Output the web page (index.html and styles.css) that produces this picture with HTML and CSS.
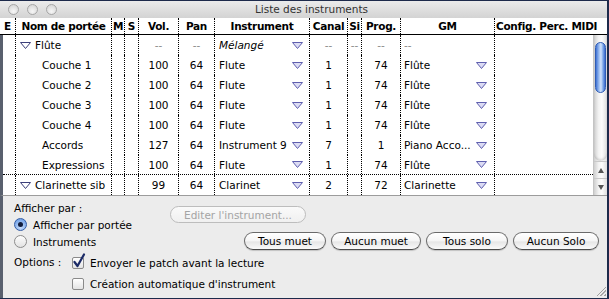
FILE: index.html
```html
<!DOCTYPE html>
<html lang="fr">
<head>
    <meta charset="UTF-8">
    <meta name="viewport" content="width=device-width, initial-scale=1.0">
    <title>Liste des instruments</title>

    <link rel="stylesheet" href="styles.css">
</head>
<body>
    <div class="window">
        <div class="titlebar">
            <div class="lights"><span></span><span></span><span></span></div>
            <div class="title">Liste des instruments</div>
        </div>

        <div class="row head">
            <div>E</div><div>Nom de portée</div><div>M</div><div>S</div><div>Vol.</div><div>Pan</div>
            <div>Instrument</div><div>Canal</div><div>Si</div><div>Prog.</div><div>GM</div>
            <div class="cfg">Config. Perc. MIDI</div>
        </div>

        <div class="list">
            <div class="rows">
                <div class="row">
                    <div></div>
                    <div class="name staff"><svg class="disc" width="11" height="7"><polygon points="0.5,0.5 10.5,0.5 5.5,6.5" /></svg>Flûte</div>
                    <div></div><div></div>
                    <div class="dash">--</div><div class="dash">--</div>
                    <div class="pick"><i>Mélangé</i><svg class="arrow" width="11" height="7"><polygon points="0.5,0.5 10.5,0.5 5.5,6.5" /></svg></div>
                    <div class="dash">--</div><div class="dash">--</div><div class="dash">--</div>
                    <div class="pick gm"><span class="grey">--</span></div>
                    <div></div>
                </div>

                <div class="row">
                    <div></div><div class="name">Couche 1</div><div></div><div></div>
                    <div>100</div><div>64</div>
                    <div class="pick">Flute<svg class="arrow" width="11" height="7"><polygon points="0.5,0.5 10.5,0.5 5.5,6.5" /></svg></div>
                    <div>1</div><div></div><div>74</div>
                    <div class="pick gm">Flûte<svg class="arrow" width="11" height="7"><polygon points="0.5,0.5 10.5,0.5 5.5,6.5" /></svg></div>
                    <div></div>
                </div>

                <div class="row">
                    <div></div><div class="name">Couche 2</div><div></div><div></div>
                    <div>100</div><div>64</div>
                    <div class="pick">Flute<svg class="arrow" width="11" height="7"><polygon points="0.5,0.5 10.5,0.5 5.5,6.5" /></svg></div>
                    <div>1</div><div></div><div>74</div>
                    <div class="pick gm">Flûte<svg class="arrow" width="11" height="7"><polygon points="0.5,0.5 10.5,0.5 5.5,6.5" /></svg></div>
                    <div></div>
                </div>

                <div class="row">
                    <div></div><div class="name">Couche 3</div><div></div><div></div>
                    <div>100</div><div>64</div>
                    <div class="pick">Flute<svg class="arrow" width="11" height="7"><polygon points="0.5,0.5 10.5,0.5 5.5,6.5" /></svg></div>
                    <div>1</div><div></div><div>74</div>
                    <div class="pick gm">Flûte<svg class="arrow" width="11" height="7"><polygon points="0.5,0.5 10.5,0.5 5.5,6.5" /></svg></div>
                    <div></div>
                </div>

                <div class="row">
                    <div></div><div class="name">Couche 4</div><div></div><div></div>
                    <div>100</div><div>64</div>
                    <div class="pick">Flute<svg class="arrow" width="11" height="7"><polygon points="0.5,0.5 10.5,0.5 5.5,6.5" /></svg></div>
                    <div>1</div><div></div><div>74</div>
                    <div class="pick gm">Flûte<svg class="arrow" width="11" height="7"><polygon points="0.5,0.5 10.5,0.5 5.5,6.5" /></svg></div>
                    <div></div>
                </div>

                <div class="row">
                    <div></div><div class="name">Accords</div><div></div><div></div>
                    <div>127</div><div>64</div>
                    <div class="pick">Instrument 9<svg class="arrow" width="11" height="7"><polygon points="0.5,0.5 10.5,0.5 5.5,6.5" /></svg></div>
                    <div>7</div><div></div><div>1</div>
                    <div class="pick gm">Piano Acco...<svg class="arrow" width="11" height="7"><polygon points="0.5,0.5 10.5,0.5 5.5,6.5" /></svg></div>
                    <div></div>
                </div>

                <div class="row sep">
                    <div></div><div class="name">Expressions</div><div></div><div></div>
                    <div>100</div><div>64</div>
                    <div class="pick">Flute<svg class="arrow" width="11" height="7"><polygon points="0.5,0.5 10.5,0.5 5.5,6.5" /></svg></div>
                    <div>1</div><div></div><div>74</div>
                    <div class="pick gm">Flûte<svg class="arrow" width="11" height="7"><polygon points="0.5,0.5 10.5,0.5 5.5,6.5" /></svg></div>
                    <div></div>
                </div>

                <div class="row">
                    <div></div>
                    <div class="name staff"><svg class="disc" width="11" height="7"><polygon points="0.5,0.5 10.5,0.5 5.5,6.5" /></svg>Clarinette sib</div>
                    <div></div><div></div>
                    <div>99</div><div>64</div>
                    <div class="pick">Clarinet<svg class="arrow" width="11" height="7"><polygon points="0.5,0.5 10.5,0.5 5.5,6.5" /></svg></div>
                    <div>2</div><div></div><div>72</div>
                    <div class="pick gm">Clarinette<svg class="arrow" width="11" height="7"><polygon points="0.5,0.5 10.5,0.5 5.5,6.5" /></svg></div>
                    <div></div>
                </div>
            </div>

            <div class="scrollbar">
                <div class="track"><div class="thumb"></div></div>
                <div class="step up"></div>
                <div class="step down"></div>
            </div>
        </div>

        <div class="panel">
            <div class="show-by">
                <div class="label">Afficher par :</div>
                <div class="radio-line"><span class="radio on"></span>Afficher par portée</div>
                <div class="radio-line"><span class="radio"></span>Instruments</div>
            </div>

            <div class="actions">
                <button class="btn edit" disabled>Editer l'instrument...</button>
                <div class="btn-row">
                    <button class="btn w-tm">Tous muet</button>
                    <button class="btn w-am">Aucun muet</button>
                    <button class="btn w-ts">Tous solo</button>
                    <button class="btn w-as">Aucun Solo</button>
                </div>
            </div>

            <div class="options">
                <div class="label">Options :</div>
                <div class="check-line">
                    <span class="check">
                        <svg width="14" height="16" viewBox="0 0 14 16"><path d="M2.5 9 L5.5 13 L12 1.5" /></svg>
                    </span>
                    Envoyer le patch avant la lecture
                </div>
                <div></div>
                <div class="check-line"><span class="check"></span>Création automatique d'instrument</div>
            </div>
        </div>

        <div class="grip"></div>
    </div>
</body>
</html>
```

FILE: styles.css
```css
body{
    margin: 0;
    background-color: #1d2a4b;
    font-family: "DejaVu Sans", sans-serif;
    font-size: 10.5px;
    color: #000;
}

.window{
    width: 607px;
    margin-top: 1px;
    position: relative;
}

/* title bar */

.titlebar{
    height: 17px;
    background: linear-gradient(#ebebeb, #d3d3d3);
    display: flex;
    align-items: center;
}

.lights{
    display: flex;
    gap: 8px;
    padding-left: 8px;
    width: 120px;
}

.lights span{
    width: 11px;
    height: 11px;
    border-radius: 50%;
    border: 1px solid #a6a6a6;
    background: radial-gradient(circle at 50% 70%, #f6f6f6, #d0d0d0);
    box-sizing: border-box;
}

.title{
    width: 367px;
    text-align: center;
    color: #333;
    line-height: 17px;
}

/* list */

.row{
    display: grid;
    grid-template-columns: 15px 96px 13px 14px 40px 36px 95px 38px 14px 39px 94px 99px;
    height: 20px;
    line-height: 20px;
    background: #fff;
}

.row > div{
    border-left: 1px dotted #000;
    text-align: center;
    white-space: nowrap;
    overflow: hidden;
}

.row > div:first-child{
    border-left: none;
}

.head{
    grid-template-columns: 15px 96px 13px 14px 40px 36px 95px 38px 14px 39px 94px 1fr;
    height: 16px;
    line-height: 16px;
    font-weight: bold;
    letter-spacing: -0.3px;
    border-bottom: 1px solid #000;
}

.head .cfg{
    text-align: left;
    padding-left: 1px;
}

.list{
    display: flex;
    border-left: 3px solid #59606e;
}

.rows{
    width: 590px;
}

.rows .row{
    grid-template-columns: 12px 96px 13px 14px 40px 36px 95px 38px 14px 39px 94px 99px;
}

.row.sep{
    height: 19px;
    border-bottom: 1px dotted #000;
}

.row .name{
    text-align: left;
    padding-left: 26px;
}

.row .staff{
    padding-left: 4px;
    display: flex;
    align-items: center;
}

.disc{
    margin-right: 4px;
}

.disc polygon{
    fill: #fff;
    stroke: #3c3f7a;
}

.row .pick{
    display: flex;
    align-items: center;
    justify-content: space-between;
    padding-left: 4px;
    padding-right: 6px;
    text-align: left;
}

.row .gm{
    padding-left: 3px;
    padding-right: 7px;
}

.arrow polygon{
    fill: #dcdcf4;
    stroke: #5f5fae;
}

.dash, .grey{
    color: #888;
}

/* scrollbar */

.scrollbar{
    width: 14px;
    height: 160px;
    display: flex;
    flex-direction: column;
    background: linear-gradient(to right, #cfcfcf, #f2f2f2 35%, #fcfcfc 60%, #dedede);
    border-left: 1px solid #c4c4c4;
    box-sizing: border-box;
}

.track{
    flex: 1;
    padding-top: 7px;
    border-radius: 0 0 7px 7px;
    box-shadow: inset 0 -2px 2px rgba(0, 0, 0, 0.12);
}

.thumb{
    width: 11px;
    height: 51px;
    margin-left: 1px;
    border: 1px solid #2f5cb4;
    border-radius: 6px;
    box-sizing: border-box;
    background: linear-gradient(to right, #3f72d4, #9fc0f2 35%, #d2e3fb 55%, #86aeea 75%, #3d6ccf);
}

.step{
    height: 16px;
    border-top: 1px solid #c9c9c9;
    display: flex;
    align-items: center;
    justify-content: center;
}

.step::after{
    content: "";
    border-left: 3.5px solid transparent;
    border-right: 3.5px solid transparent;
}

.up::after{
    border-bottom: 5px solid #555;
}

.down::after{
    border-top: 5px solid #555;
}

/* bottom panel */

.panel{
    background: #ececec;
    border-top: 1px solid #9c9c9c;
    border-left: 3px solid #59606e;
    height: 103px;
    padding: 5px 8px 0 11px;
    box-sizing: border-box;
    display: grid;
    grid-template-columns: 156px 1fr;
    align-content: start;
}

.show-by .label{
    line-height: 15px;
}

.radio-line{
    display: flex;
    align-items: center;
    height: 17px;
    gap: 6px;
}

.radio{
    width: 13px;
    height: 13px;
    border-radius: 50%;
    border: 1px solid #8c8c8c;
    box-sizing: border-box;
    background: linear-gradient(#fdfdfd, #e2e2e2);
    display: flex;
    align-items: center;
    justify-content: center;
}

.radio.on{
    border-color: #355ea6;
    background: radial-gradient(circle at 50% 75%, #c6dcfb, #5f94e2);
}

.radio.on::after{
    content: "";
    width: 5px;
    height: 5px;
    border-radius: 50%;
    background: #101c3c;
}

.actions{
    padding-top: 5px;
}

.btn{
    font-family: "DejaVu Sans", sans-serif;
    font-size: 10.5px;
    height: 18px;
    padding: 0;
    border: 1px solid #6a6a6a;
    border-bottom-color: #4a4a4a;
    border-radius: 9px;
    background: linear-gradient(#ffffff, #f5f5f5 50%, #e6e6e6 55%, #fafafa);
    box-shadow: 0 1px 1px rgba(0, 0, 0, 0.18);
    color: #000;
}

.btn.edit{
    width: 136px;
    height: 17px;
    color: #a4a4a4;
    border-color: #bdbdbd;
    background: linear-gradient(#fafafa, #f0f0f0);
    box-shadow: none;
}

.btn-row{
    display: flex;
    justify-content: flex-end;
    gap: 5px;
    margin-top: 9px;
}

.w-tm{ width: 82px; }
.w-am{ width: 90px; }
.w-ts{ width: 82px; }
.w-as{ width: 86px; }

.options{
    grid-column: 1 / 3;
    display: grid;
    grid-template-columns: 58px 1fr;
    grid-auto-rows: 21px;
    margin-top: 2px;
}

.options .label{
    line-height: 21px;
}

.check-line{
    display: flex;
    align-items: center;
    gap: 6px;
}

.check{
    width: 12px;
    height: 12px;
    border: 1px solid #8a8a8a;
    border-radius: 2px;
    box-sizing: border-box;
    background: linear-gradient(#ffffff, #e4e4e4);
    position: relative;
}

.check svg{
    position: absolute;
    left: -1px;
    top: -5px;
}

.check path{
    fill: none;
    stroke: #1b2a66;
    stroke-width: 2.2;
    stroke-linecap: round;
    stroke-linejoin: round;
}

.grip{
    position: absolute;
    right: 1px;
    bottom: 2px;
    width: 9px;
    height: 9px;
    background: linear-gradient(135deg, transparent 45%, #a0a0a0 46%, #a0a0a0 52%, transparent 53%, transparent 65%, #a0a0a0 66%, #a0a0a0 72%, transparent 73%, transparent 85%, #a0a0a0 86%);
}
```
